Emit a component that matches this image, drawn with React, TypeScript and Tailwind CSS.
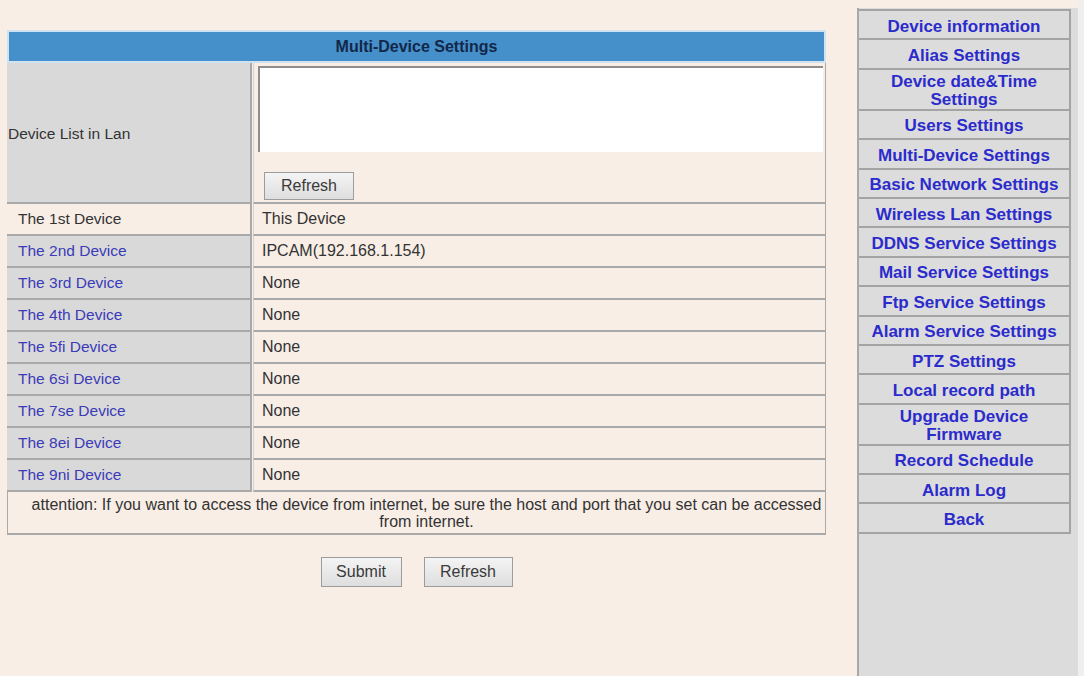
import React from "react";

const devices: { label: string; value: string }[] = [
  { label: "The 1st Device", value: "This Device" },
  { label: "The 2nd Device", value: "IPCAM(192.168.1.154)" },
  { label: "The 3rd Device", value: "None" },
  { label: "The 4th Device", value: "None" },
  { label: "The 5fi Device", value: "None" },
  { label: "The 6si Device", value: "None" },
  { label: "The 7se Device", value: "None" },
  { label: "The 8ei Device", value: "None" },
  { label: "The 9ni Device", value: "None" },
];

const menu: { text: string[]; tall?: boolean }[] = [
  { text: ["Device information"] },
  { text: ["Alias Settings"] },
  { text: ["Device date&Time", "Settings"], tall: true },
  { text: ["Users Settings"] },
  { text: ["Multi-Device Settings"] },
  { text: ["Basic Network Settings"] },
  { text: ["Wireless Lan Settings"] },
  { text: ["DDNS Service Settings"] },
  { text: ["Mail Service Settings"] },
  { text: ["Ftp Service Settings"] },
  { text: ["Alarm Service Settings"] },
  { text: ["PTZ Settings"] },
  { text: ["Local record path"] },
  { text: ["Upgrade Device", "Firmware"], tall: true },
  { text: ["Record Schedule"] },
  { text: ["Alarm Log"] },
  { text: ["Back"] },
];

function Button({ label, w, h }: { label: string; w: string; h: string }) {
  return (
    <button
      className={`${w} ${h} bg-gradient-to-b from-[#f4f4f4] to-[#dedede] border border-[#9c9c9c] text-[16px] text-[#3a3a3a] flex items-center justify-center`}
    >
      {label}
    </button>
  );
}

export default function App() {
  return (
    <div
      className="flex w-[1084px] h-[676px] bg-[#f8eee6] overflow-hidden"
      style={{ fontFamily: '"Liberation Sans", Arial, sans-serif' }}
    >
      <main className="w-[857px] pt-[30px] pl-[7px]">
        <div className="w-[819px]">
          <div className="h-[33px] border-2 border-[#cfe2ef] bg-[#4590cb] flex items-center justify-center font-bold text-[16px] text-[#132748]">
            Multi-Device Settings
          </div>

          <div className="flex h-[141px]">
            <div className="w-[245px] bg-[#d9d9d9] border-r-2 border-b-2 border-[#a9a9a9] flex items-center pl-[1px] pt-[3px] text-[15.5px] text-[#333]">
              Device List in Lan
            </div>
            <div className="flex-1 ml-[1px] border-b-2 border-r border-[#a9a9a9] border-l border-l-[#d4d4d4] flex flex-col">
              <div className="mt-[3px] ml-[4px] mr-[2px] h-[86px] bg-white border-t-2 border-l-2 border-[#8d8d8d]" />
              <div className="mt-[20px] ml-[10px]">
                <Button label="Refresh" w="w-[90px]" h="h-[28px]" />
              </div>
            </div>
          </div>

          {devices.map((d, i) => (
            <div key={d.label} className="flex h-[32px]">
              <div
                className={`w-[245px] border-r-2 border-b-2 border-[#a9a9a9] flex items-center pl-[11px] text-[15.5px] ${
                  i === 0 ? "bg-[#f8eee6] text-[#333]" : "bg-[#d9d9d9] text-[#3b3bb8]"
                }`}
              >
                {d.label}
              </div>
              <div className="flex-1 ml-[1px] border-b-2 border-r border-[#a9a9a9] border-l border-l-[#d4d4d4] flex items-center pl-[8px] text-[16px] text-[#333]">
                {d.value}
              </div>
            </div>
          ))}

          <div className="h-[43px] border-b-2 border-r border-l border-[#a9a9a9] flex items-center justify-center text-center text-[16px] leading-[17px] text-[#333] pl-[22px] pr-[2px]">
            attention: If you want to access the device from internet, be sure the host and port that you set can be accessed from internet.
          </div>
        </div>

        <div className="w-[819px] flex justify-center gap-[22px] mt-[22px]">
          <Button label="Submit" w="w-[81px]" h="h-[30px]" />
          <Button label="Refresh" w="w-[89px]" h="h-[30px]" />
        </div>
      </main>

      <aside className="w-[221px] mt-[8px] bg-[#dcdcdc] border-l-2 border-[#a8a8a8] pt-[1px]">
        <nav className="w-[212px] border-t-2 border-r-2 border-[#a4a4a4]">
          {menu.map((m) => (
            <div
              key={m.text.join(" ")}
              className={`${m.tall ? "h-[41px]" : "h-[29.4px]"} border-b-2 border-[#a4a4a4] flex flex-col items-center justify-center pt-[4px] font-bold text-[17px] leading-[18px] text-[#2b2bcc]`}
            >
              {m.text.map((t) => (
                <span key={t}>{t}</span>
              ))}
            </div>
          ))}
        </nav>
      </aside>
      <div className="w-[6px] bg-[#f1efed]" />
    </div>
  );
}
